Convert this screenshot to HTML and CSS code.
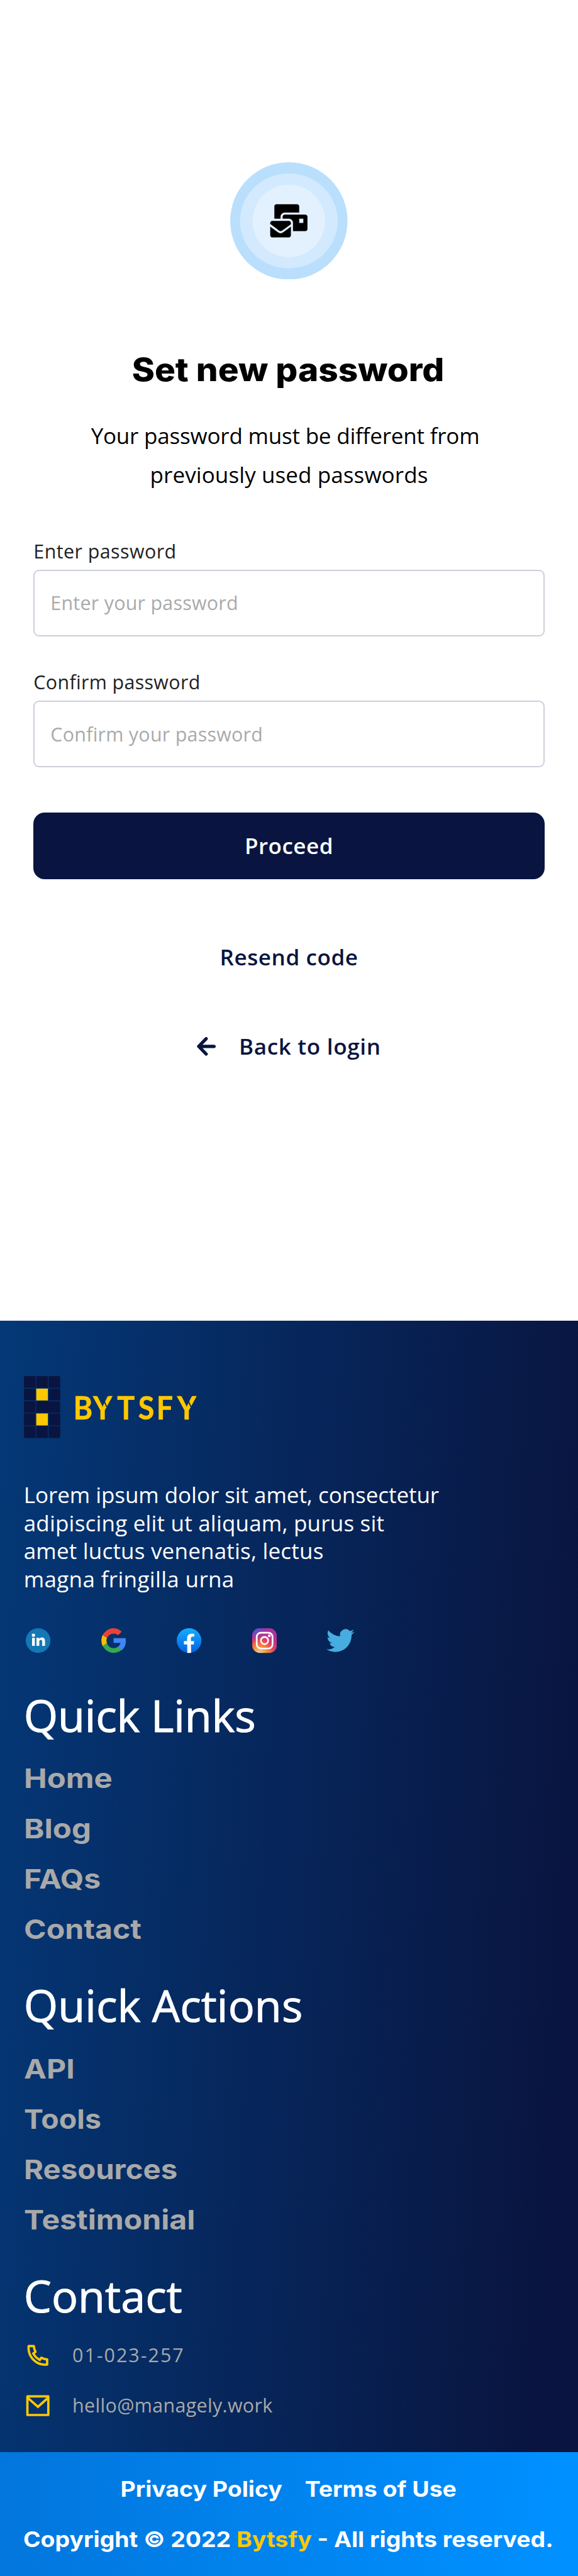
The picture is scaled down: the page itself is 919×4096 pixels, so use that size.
FILE: index.html
```html
<!DOCTYPE html>
<html lang="en">
<head>
<meta charset="utf-8">
<title>Set new password</title>
<link rel="stylesheet" href="styles.css">
</head>
<body>
<main class="reset">
  <svg class="badge" viewBox="0 0 252 252" aria-hidden="true">
    <circle cx="126" cy="126" r="126" fill="#b9dffd"/>
    <ellipse cx="126" cy="126" rx="105" ry="102" fill="#d2e9fe"/>
    <circle cx="126" cy="126" r="78" fill="#e3f1ff"/>
    <path transform="translate(86 90.3) scale(.1389)" d="M160 448c-25.6 0-51.2-22.4-64-32-64-44.8-83.2-60.8-96-70.4V480c0 17.67 14.33 32 32 32h256c17.67 0 32-14.33 32-32V345.6c-12.8 9.6-32 25.6-96 70.4-12.8 9.6-38.4 32-64 32zm128-192H32c-17.67 0-32 14.33-32 32v16c25.6 19.2 22.4 19.2 115.2 86.4 9.6 6.4 28.8 25.6 44.8 25.6s35.2-19.2 44.8-22.4c92.8-67.2 89.6-67.2 115.2-86.4V288c0-17.67-14.33-32-32-32zm256-96H224c-17.67 0-32 14.33-32 32v32h96c33.21 0 60.59 25.42 63.71 57.82l.29-.22V416h192c17.67 0 32-14.33 32-32V192c0-17.67-14.33-32-32-32zm-32 128h-64v-64h64v64zm-352-96c0-35.29 28.71-64 64-64h224V32c0-17.67-14.33-32-32-32H96C78.33 0 64 14.33 64 32v192h96v-32z"/>
  </svg>
  <h1 class="title"><span class="wide">Set new password</span></h1>
  <p class="hint"><span class="hint-first">Your password must be different from</span><br>previously used passwords</p>
  <form class="form">
    <label class="label" for="pw">Enter password</label>
    <input class="input" id="pw" type="password" placeholder="Enter your password">
    <label class="label label-next" for="pw2">Confirm password</label>
    <input class="input" id="pw2" type="password" placeholder="Confirm your password">
    <button class="submit" type="button">Proceed</button>
  </form>
  <a class="resend">Resend code</a>
  <a class="back">
    <svg class="back-icon" viewBox="0 0 40 40" aria-hidden="true"><path d="M37 20H4M20 3.500 4 20 20 36.500" fill="none" stroke="#091540" stroke-width="7" stroke-linecap="round" stroke-linejoin="round"/></svg>
    <span>Back to login</span>
  </a>
</main>

<footer class="footer">
  <svg class="logo" viewBox="0 0 372 133" role="img" aria-label="Bytsfy">
    <g fill="#091540">
      <path d="M3 0H25V25.5H0V3a3 3 0 0 1 3-3zM26.500 0H51.500V25.500H26.500zM53 0H75a3 3 0 0 1 3 3V25.500H53zM0 27H25V52.500H0zM53 27H78V52.500H53zM0 54H25V79H0zM26.500 54H75a3 3 0 0 1 3 3V76a3 3 0 0 1-3 3H26.500zM0 80.500H25V106H0zM53 80.500H78V106H53zM0 107.500H25V133H3a3 3 0 0 1-3-3zM26.500 107.500H51.500V133H26.500zM53 107.500H78V130a3 3 0 0 1-3 3H53z"/>
    </g>
    <path d="M26.500 27H51.500V52.500H26.500zM26.500 80.500H51.500V106H26.500z" fill="#ffc800"/>
    <text class="logo-text" transform="scale(.9 1)" y="93.300" x="117.800 165 222.500 273 316.500 366">BYTSFY</text>
    <path d="M170 49 178 66M351 49 359 66" stroke="#072f69" stroke-width="2.500"/>
  </svg>
  <p class="about"><span>Lorem ipsum dolor sit amet, consectetur</span><span>adipiscing elit ut aliquam, purus sit</span><span>amet luctus venenatis, lectus</span><span>magna fringilla urna</span></p>
  <div class="social">
    <svg class="social-icon" viewBox="0 0 53 53"><circle cx="26.500" cy="26.500" r="26.500" fill="#1478b5"/><g fill="#fff"><circle cx="16.500" cy="15" r="3.500"/><path d="M13.500 20.500H19.500V38H13.500zM23 20.500H29V23C30.500 20.700 32.500 20 35 20 40 20 41.300 23.500 41.300 28V38H35.300V29C35.300 26.500 34.700 25 32.500 25 30 25 29 26.700 29 29V38H23z"/></g></svg>
    <svg class="social-icon" viewBox="3 3 42 42"><path fill="#4285f4" d="M44.500 20H24v8h11.800C35 31 33.500 33.300 31 35l6.500 6C42 37 45 31.500 45 24.500c0-1.600-.2-3.100-.5-4.500z"/><path fill="#ea4335" d="M6.300 14.700 13 19.500C14.800 15.100 19 12 24 12c3.100 0 5.500 1.200 7.600 2.800L38 9C34.500 5.500 29.500 3 24 3 16 3 9.200 7.800 5.500 14.700z"/><path fill="#fbbc05" d="M5.500 14.500C2.500 20 2.500 27.500 5.500 33.500L12.800 28.500C11.500 25.500 11.500 22.500 12.800 19.500z"/><path fill="#34a853" d="M5.500 33.300C9 40 16 45 24 45c5.500 0 10.200-1.800 14-5.500L31.200 34.500C29.500 35.700 27 37 24 37c-5.200 0-9.600-3.500-11.300-8.500z"/></svg>
    <svg class="social-icon" viewBox="0 0 53 53"><defs><linearGradient id="fb" x1="0" y1="0" x2="0" y2="1"><stop stop-color="#18acfe"/><stop offset="1" stop-color="#0163e0"/></linearGradient></defs><circle cx="26.500" cy="26.500" r="26.500" fill="url(#fb)"/><path fill="#fff" d="M22.600 53V34.700H15.500V27.700H22.200V23C22.200 15 26 11.800 32 11.800c2 0 4 .2 5.700.5V18H34.500C31.500 18 30.500 19.500 30.500 22V27.700H37.500L36.500 34.700H30.500L31 53z"/></svg>
    <svg class="social-icon" viewBox="0 0 53 53"><defs><radialGradient id="ig" cx=".3" cy="1.050" r="1.050"><stop stop-color="#e8dc9c"/><stop offset=".1" stop-color="#efc584"/><stop offset=".3" stop-color="#ff8d34"/><stop offset=".58" stop-color="#e13f62"/><stop offset=".82" stop-color="#b72f99"/><stop offset="1" stop-color="#a832a5"/></radialGradient><radialGradient id="ig2" cx=".1" cy="0" r=".5"><stop stop-color="#3a62dc"/><stop offset="1" stop-color="#6a40c8" stop-opacity="0"/></radialGradient></defs><rect width="53" height="53" rx="16" fill="url(#ig)"/><rect width="53" height="53" rx="16" fill="url(#ig2)"/><g fill="none" stroke="#fff" stroke-width="3.600"><rect x="9.700" y="9.600" width="34" height="34" rx="9"/><circle cx="26.500" cy="26.500" r="7.800"/></g><circle cx="36.700" cy="16.300" r="3" fill="#fff"/></svg>
    <svg class="social-icon bird" viewBox="0 2 24 20"><path fill="#47acdf" d="M23.953 4.570a10 10 0 01-2.825.775 4.958 4.958 0 002.163-2.723c-.951.555-2.005.959-3.127 1.184a4.920 4.920 0 00-8.384 4.482C7.690 8.095 4.067 6.130 1.640 3.162a4.822 4.822 0 00-.666 2.475c0 1.710.870 3.213 2.188 4.096a4.904 4.904 0 01-2.228-.616v.060a4.923 4.923 0 003.946 4.827 4.996 4.996 0 01-2.212.085 4.936 4.936 0 004.604 3.417 9.867 9.867 0 01-6.102 2.105c-.390 0-.779-.023-1.170-.067a13.995 13.995 0 007.557 2.209c9.053 0 13.998-7.496 13.998-13.985 0-.210 0-.420-.015-.630A9.935 9.935 0 0024 4.590z"/></svg>
  </div>
  <h2 class="heading">Quick Links</h2>
  <nav class="links site-links"><a class="wide">Home</a><a class="wide">Blog</a><a class="wide">FAQs</a><a class="wide">Contact</a></nav>
  <h2 class="heading heading-next">Quick Actions</h2>
  <nav class="links action-links"><a class="wide">API</a><a class="wide">Tools</a><a class="wide">Resources</a><a class="wide">Testimonial</a></nav>
  <h2 class="heading heading-next">Contact</h2>
  <ul class="contact">
    <li class="contact-row"><svg class="contact-icon" viewBox="0 0 24 24"><path d="M9.366 10.682a10.556 10.556 0 003.952 3.952l.884-1.238a1 1 0 011.294-.296 11.422 11.422 0 004.583 1.364 1 1 0 01.921.997v4.462a1 1 0 01-.898.995c-.530.055-1.064.082-1.602.082C9.940 21 3 14.060 3 5.500c0-.538.027-1.072.082-1.602A1 1 0 014.077 3h4.462a1 1 0 01.997.921A11.422 11.422 0 0010.900 8.504a1 1 0 01-.296 1.294l-1.238.884zm-2.522-.657l1.900-1.357A13.410 13.410 0 017.647 5H5.010c-.006.166-.009.333-.009.500C5 12.956 11.044 19 18.500 19c.167 0 .334-.003.500-.010v-2.637a13.410 13.410 0 01-3.668-1.097l-1.357 1.900a12.442 12.442 0 01-1.588-.750l-.058-.033a12.556 12.556 0 01-4.702-4.702l-.033-.058a12.442 12.442 0 01-.750-1.588z"/></svg><span class="phone">01-023-257</span></li>
    <li class="contact-row"><svg class="contact-icon" viewBox="0 0 24 24"><path d="M3 3h18a1 1 0 011 1v16a1 1 0 01-1 1H3a1 1 0 01-1-1V4a1 1 0 011-1zm17 4.238l-7.928 7.100L4 7.216V19h16V7.238zM4.511 5l7.550 6.662L19.502 5H4.511z"/></svg><span>hello@managely.work</span></li>
  </ul>
</footer>
<div class="legal">
  <div class="legal-row"><a class="policy">Privacy Policy</a><a>Terms of Use</a></div>
  <p class="legal-row">Copyright © 2022&nbsp;<span class="brand">Bytsfy</span>&nbsp;- All rights reserved.</p>
</div>
</body>
</html>
```
FILE: styles.css
```css
* { box-sizing: border-box; margin: 0; padding: 0; }
body { width: 919px; background: #fff; font-family: "Open Sans", "Noto Sans", sans-serif; overflow-x: hidden; }

.reset { height: 2100px; padding: 257.500px 53.300px 0; display: flex; flex-direction: column; align-items: center; }
.badge { width: 186.500px; height: 186.500px; flex: none; }
.title { margin-top: 111.300px; font: 800 51.300px/64px Inter, sans-serif; white-space: nowrap; color: #000; }
.wide { display: inline-block; transform-origin: left center; }
.title .wide { padding-right: 3px; transform-origin: center; transform: scaleX(1.070); }
.hint { margin-top: 42.500px; font-size: 35px; line-height: 62px; text-align: center; color: #000; letter-spacing: .100px; white-space: nowrap; }
.hint-first { padding-right: 12px; letter-spacing: -.200px; }

.form { width: 100%; margin-top: 70px; display: flex; flex-direction: column; }
.label { font-size: 30.400px; line-height: 42px; letter-spacing: .450px; color: #222; }
.label-next { margin-top: 52.400px; letter-spacing: .350px; }
.input { margin-top: 7.800px; height: 106.200px; width: 100%; border: 2px solid #cdcfdb; border-radius: 9px; padding: 0 25px; background: #fff; font: 30.400px "Open Sans", sans-serif; letter-spacing: .270px; }
.input::placeholder { color: #aaa; opacity: 1; }
.submit { margin-top: 71.500px; height: 106px; border: 0; border-radius: 18px; background: #091540; color: #fff; font: 600 35px "Open Sans", sans-serif; letter-spacing: .500px; }
.resend { margin-top: 100.400px; font-size: 35px; font-weight: 600; line-height: 48px; letter-spacing: .600px; color: #091540; }
.back { margin-top: 94px; display: flex; align-items: center; gap: 37px; font-size: 35px; font-weight: 600; line-height: 48px; letter-spacing: .700px; color: #091540; }
.back-icon { width: 29.600px; height: 29.600px; }

.footer { height: 1799px; padding: 87.500px 37.700px 0; background: linear-gradient(94deg, #043877 0%, #091540 92%); color: #fff; }
.logo { display: block; width: 275.300px; height: 98.400px; overflow: visible; }
.logo-text { font: 700 70px Lato, sans-serif; fill: #ffc800; stroke: #ffc800; stroke-width: .8px; }
.about { margin-top: 69.500px; font-size: 35px; line-height: 44.400px; white-space: nowrap; }
.about span { display: block; letter-spacing: .200px; }
.about span:first-child { letter-spacing: -.050px; }
.about span:last-child { letter-spacing: .350px; }
.social { margin: 56.300px 0 0 3px; display: flex; gap: 81px; }
.social-icon { width: 39.200px; height: 39.200px; }
.bird { width: 44.500px; margin-left: -2px; }
.heading { margin-top: 53.400px; font-size: 70px; font-weight: 400; line-height: 90px; letter-spacing: -.200px; -webkit-text-stroke: 1px #fff; white-space: nowrap; }
.heading-next { margin-top: 36.400px; letter-spacing: .100px; }
.links { margin-top: 15.200px; display: flex; flex-direction: column; align-items: flex-start; font: 700 43px/80px Inter, sans-serif; color: #a9a9a9; }
.links .wide { transform: scaleX(1.120); }
.site-links .wide:nth-child(-n+2) { transform: scaleX(1.142); }
.action-links .wide:nth-child(2) { transform: scaleX(1.080); }
.action-links .wide:nth-child(3) { transform: scaleX(1.100); }
.contact { margin-top: 10.300px; list-style: none; color: #a9a9a9; font-size: 30.400px; line-height: 80px; letter-spacing: .350px; }
.contact-row { height: 80px; display: flex; align-items: center; gap: 33px; }
.contact-icon { width: 44.400px; height: 44.400px; fill: #ffc800; }
.phone { letter-spacing: 2px; }

.legal { height: 197px; padding-top: 19.200px; display: flex; flex-direction: column; align-items: center; background: linear-gradient(94deg, #0276dc 0%, #0090ff 95%); color: #fff; font: 700 34.400px/80px Inter, sans-serif; white-space: nowrap; }
.legal-row { height: 80px; display: flex; transform: translateX(-1px) scaleX(1.088); }
.policy { margin-right: 33px; }
.brand { color: #ffc800; }
```
